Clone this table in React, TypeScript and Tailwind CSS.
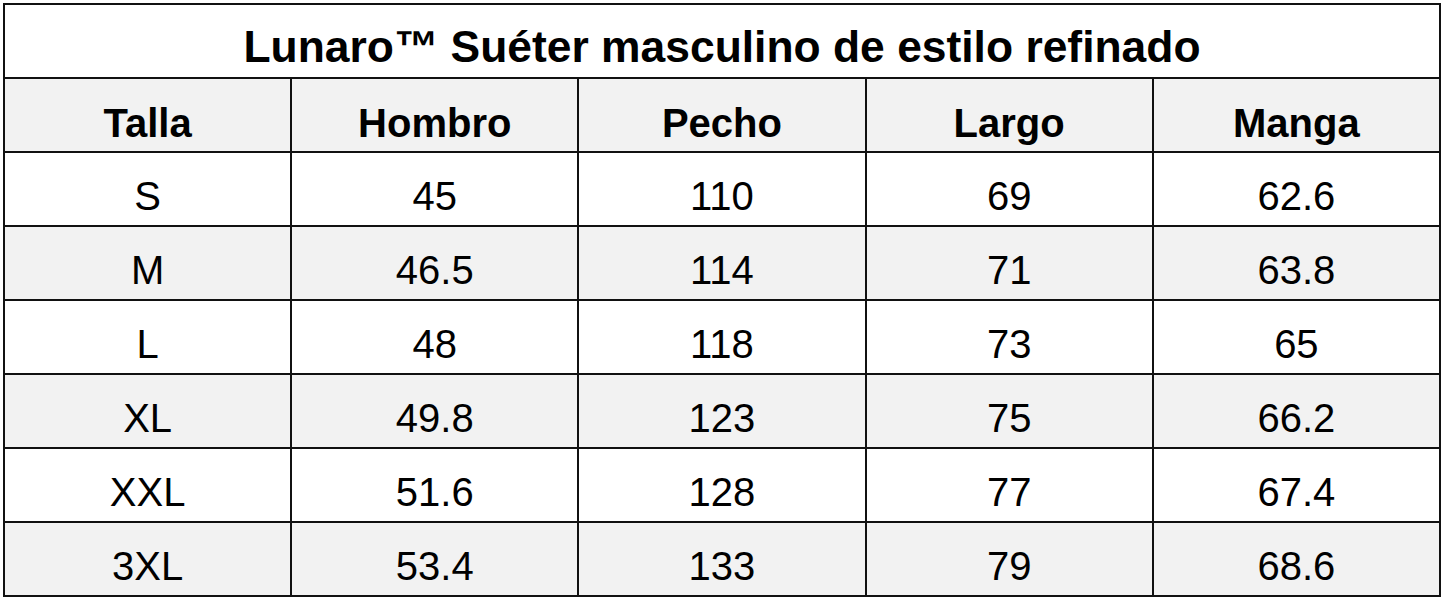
const headers = ["Talla", "Hombro", "Pecho", "Largo", "Manga"];

const rows = [
  ["S", "45", "110", "69", "62.6"],
  ["M", "46.5", "114", "71", "63.8"],
  ["L", "48", "118", "73", "65"],
  ["XL", "49.8", "123", "75", "66.2"],
  ["XXL", "51.6", "128", "77", "67.4"],
  ["3XL", "53.4", "133", "79", "68.6"],
];

export default function App() {
  return (
    <div className="bg-white w-[1445px] h-[600px] pt-[3px] pl-[3px] font-['Liberation_Sans',Arial,sans-serif] text-black">
      <table className="w-[1438px] border-collapse table-fixed">
        <tbody>
          <tr className="h-[74px]">
            <td colSpan={5} className="border-2 border-[#111] text-center font-bold text-[44.4px] leading-none p-0 pt-[12px]">
              Lunaro™ Suéter masculino de estilo refinado
            </td>
          </tr>
          <tr className="h-[74px] bg-[#f2f2f2]">
            {headers.map((h) => (
              <td key={h} className="border-2 border-[#111] text-center font-bold text-[40px] leading-none p-0 pt-[15px]">
                {h}
              </td>
            ))}
          </tr>
          {rows.map((r, i) => (
            <tr key={r[0]} className={i % 2 === 0 ? "h-[74px] bg-white" : "h-[74px] bg-[#f2f2f2]"}>
              {r.map((c, j) => (
                <td key={j} className="border-2 border-[#111] text-center text-[40px] leading-none p-0 pt-[14px]">
                  {c}
                </td>
              ))}
            </tr>
          ))}
        </tbody>
      </table>
    </div>
  );
}
